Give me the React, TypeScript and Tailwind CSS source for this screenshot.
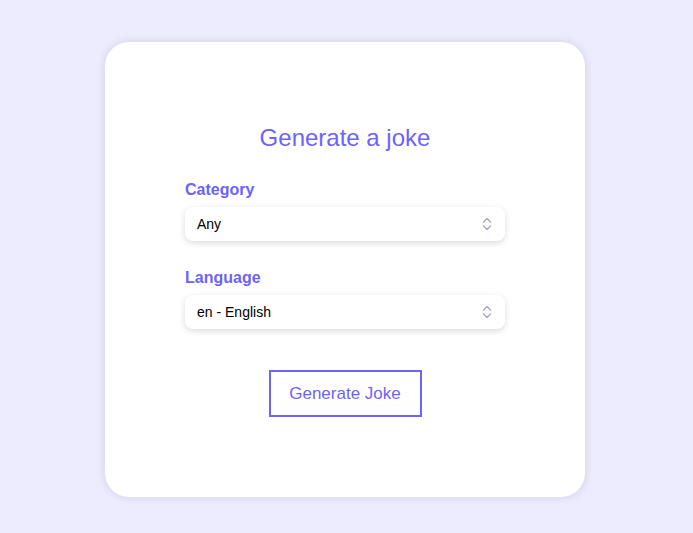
import React from "react";

function Chevrons() {
  return (
    <svg width="12" height="16" viewBox="0 0 12 16" fill="none" stroke="#a3a8b5" strokeWidth="1.4" strokeLinecap="round" strokeLinejoin="round">
      <path d="M2.5 6 L6 2.5 L9.5 6" />
      <path d="M2.5 10 L6 13.5 L9.5 10" />
    </svg>
  );
}

function Select({ value }: { value: string }) {
  return (
    <div className="flex h-[34px] w-full items-center justify-between rounded-lg bg-white pl-3 pr-[12px] shadow-[0_2px_6px_rgba(0,0,0,0.15)]">
      <span className="text-[14px] text-black">{value}</span>
      <Chevrons />
    </div>
  );
}

export default function App() {
  return (
    <div className="flex min-h-[533px] w-full justify-center bg-[#ececfe] pr-[3px] pt-[42px]" style={{ fontFamily: '"Liberation Sans", Arial, sans-serif' }}>
      <div className="flex h-[455px] w-[480px] flex-col items-center rounded-[24px] bg-white pt-[82px] shadow-[0_0_10px_rgba(0,0,0,0.12)]">
        <h1 className="h-[28px] text-[24px] leading-[28px] text-[#6c63ff]">Generate a joke</h1>
        <div className="mt-[28px] flex w-[320px] flex-col">
          <label className="h-[19px] text-[16px] font-bold leading-[19px] text-[#6c63ff]">Category</label>
          <div className="mt-[8px]">
            <Select value="Any" />
          </div>
          <label className="mt-[27px] h-[19px] text-[16px] font-bold leading-[19px] text-[#6c63ff]">Language</label>
          <div className="mt-[8px]">
            <Select value="en - English" />
          </div>
        </div>
        <button className="mt-[41px] h-[47px] w-[153px] border-2 border-[#6c63ff] bg-white text-[17px] text-[#6c63ff]">
          Generate Joke
        </button>
      </div>
    </div>
  );
}
